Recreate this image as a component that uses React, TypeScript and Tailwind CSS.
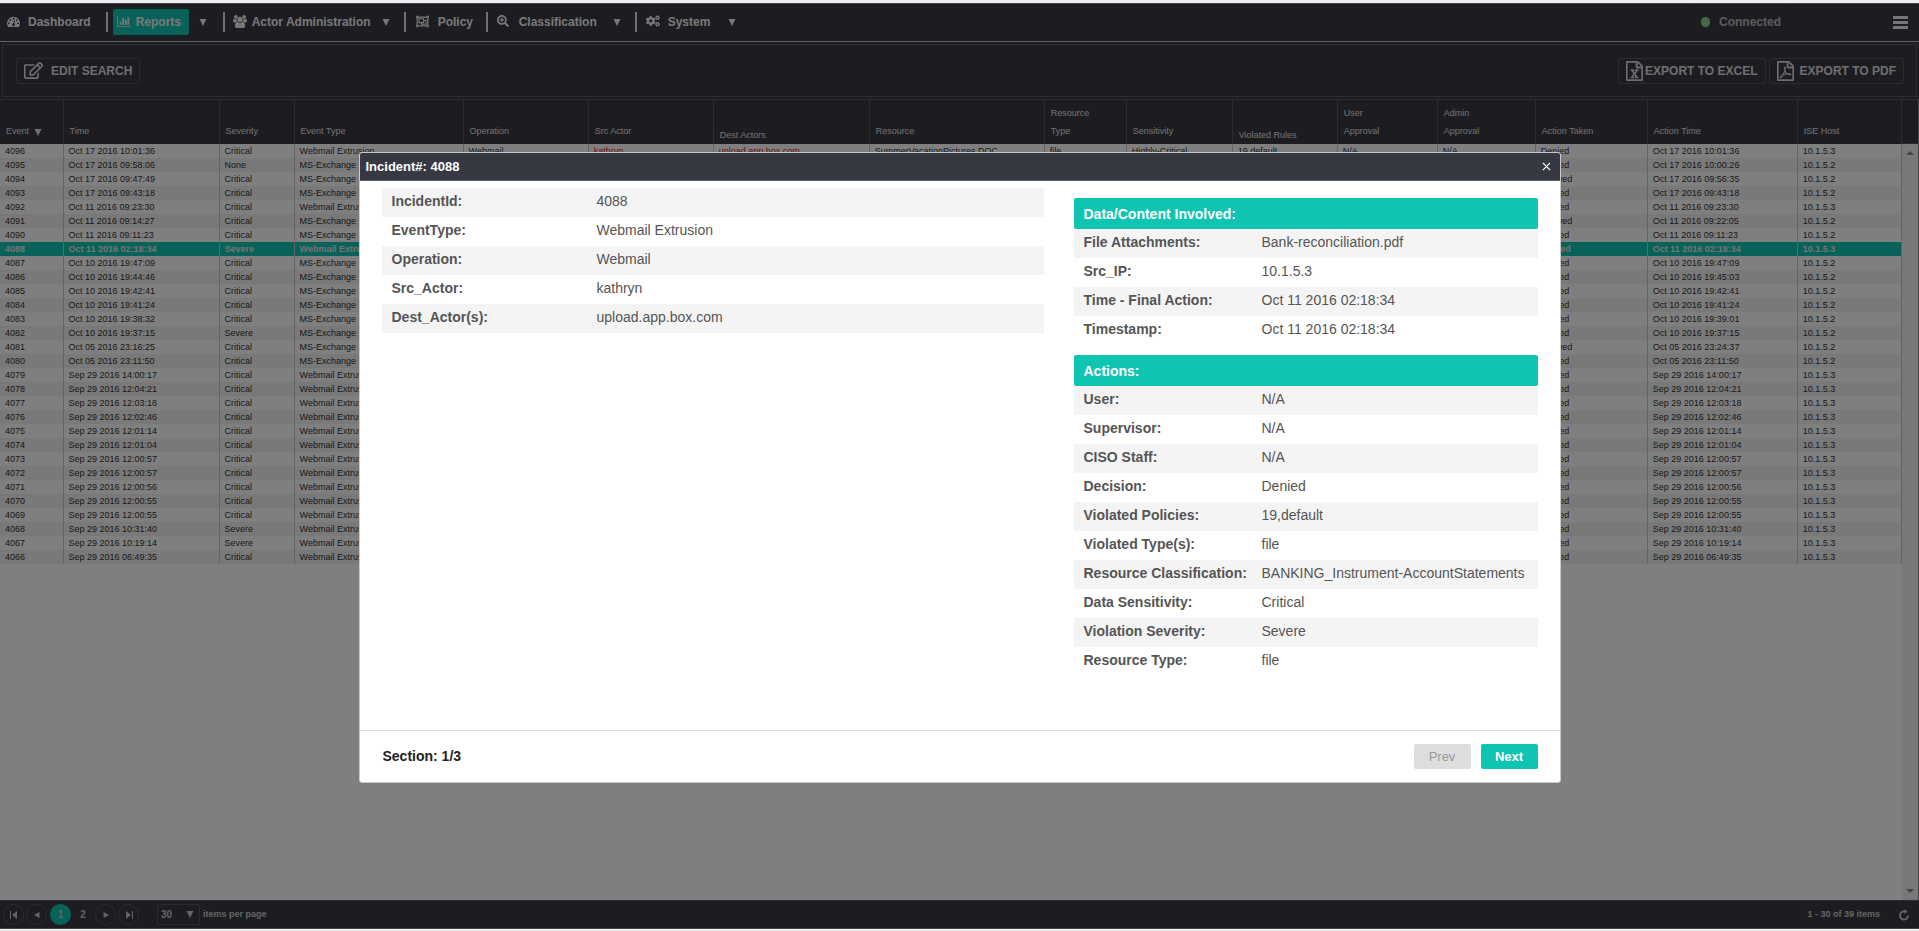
import { clsx } from 'clsx';
import React from 'react';
import { FaCogs, FaRegEdit, FaRegObjectGroup, FaSearchPlus } from 'react-icons/fa';

const paths = {
	dashboard:
		'M384 1152q0-53-37.5-90.5t-90.5-37.5-90.5 37.5-37.5 90.5 37.5 90.5 90.5 37.5 90.5-37.5 37.5-90.5zM576 704q0-53-37.5-90.5t-90.5-37.5-90.5 37.5-37.5 90.5 37.5 90.5 90.5 37.5 90.5-37.5 37.5-90.5zM1004 1185l101-382q6-26-7.5-48.5t-38.5-29.5-48 6.5-30 39.5l-101 382q-60 5-107 43.5t-63 98.5q-20 77 20 146t117 89 146-20 89-117q16-60-6-117t-72-91zM1664 1152q0-53-37.5-90.5t-90.5-37.5-90.5 37.5-37.5 90.5 37.5 90.5 90.5 37.5 90.5-37.5 37.5-90.5zM1024 512q0-53-37.5-90.5t-90.5-37.5-90.5 37.5-37.5 90.5 37.5 90.5 90.5 37.5 90.5-37.5 37.5-90.5zM1472 704q0-53-37.5-90.5t-90.5-37.5-90.5 37.5-37.5 90.5 37.5 90.5 90.5 37.5 90.5-37.5 37.5-90.5zM1792 1152q0 261-141 483-19 29-54 29h-1402q-35 0-54-29-141-221-141-483 0-182 71-348t191-286 286-191 348-71 348 71 286 191 191 286 71 348z',
	chart: 'M640 896v512h-256v-512h256zM1024 384v1024h-256v-1024h256zM2048 1536v128h-2048v-1536h128v1408h1920zM1408 640v768h-256v-768h256zM1792 256v1152h-256v-1152h256z',
	users: 'M593 896q-162 5-265 128h-134q-82 0-138-40.5t-56-118.5q0-353 124-353 6 0 43.5 21t97.5 42.5 119 21.5q67 0 133-23-5 37-5 66 0 139 81 256zM1664 1533q0 120-73 189.5t-194 69.5h-874q-121 0-194-69.5t-73-189.5q0-53 3.5-103.5t14-109 26.5-108.5 43-97.5 62-81 85.5-53.5 111.5-20q10 0 43 21.5t73 48 107 48 135 21.5 135-21.5 107-48 73-48 43-21.5q61 0 111.5 20t85.5 53.5 62 81 43 97.5 26.5 108.5 14 109 3.5 103.5zM640 256q0 106-75 181t-181 75-181-75-75-181 75-181 181-75 181 75 75 181zM1344 640q0 159-112.5 271.5t-271.5 112.5-271.5-112.5-112.5-271.5 112.5-271.5 271.5-112.5 271.5 112.5 112.5 271.5zM1920 865q0 78-56 118.5t-138 40.5h-134q-103-123-265-128 81-117 81-256 0-29-5-66 66 23 133 23 59 0 119-21.5t97.5-42.5 43.5-21q124 0 124 353zM1792 256q0 106-75 181t-181 75-181-75-75-181 75-181 181-75 181 75 75 181z',
	file: 'M1468 380q28 28 48 76t20 88v1152q0 40-28 68t-68 28h-1344q-40 0-68-28t-28-68v-1600q0-40 28-68t68-28h896q40 0 88 20t76 48zM1024 136v376h376q-10-29-22-41l-313-313q-12-12-41-22zM1408 1664v-1024h-416q-40 0-68-28t-28-68v-416h-768v1536h1280z',
	excel: 'M429 1430v106h281v-106h-75l103-161q5-7 10-16.5t7.5-13.5 3.5-4h2q1 4 5 10 2 4 4.5 7.5t6 8 6.5 8.5l107 161h-76v106h291v-106h-68l-192-273 195-282h67v-107h-279v107h74l-103 159q-4 7-10 16.5t-9 13.5l-2 3h-2q-1-4-5-10-6-11-17-23l-106-159h76v-107h-290v107h68l189 272-194 283h-68z',
	pdf: 'M894 1071q33 26 84 56 59-7 117-7 147 0 177 49 16 22 2 52 0 1-1 2l-2 2v1q-6 38-71 38-48 0-115-20t-130-53q-221 24-392 83-153 262-242 262-15 0-28-7l-24-12q-1-1-6-5-10-10-6-36 9-40 56-91.5t132-96.5q14-9 23 6 2 2 2 4 52-85 107-197 68-136 104-262-24-82-30.5-159.5t6.5-127.5q11-40 42-40h22q23 0 35 15 18 21 9 68-2 6-4 8 1 3 1 8v30q-2 123-14 192 55 164 146 238zM318 1482q52-24 137-158-51 40-87.5 84t-49.5 74zM716 562q-15 42-2 132 1-7 7-44 0-3 7-43 1-4 4-8-1-1-1-2-1-2-1-3-1-22-13-36 0 1-1 2v2zM592 1223q135-54 284-81-2-1-13-9.5t-16-13.5q-76-67-127-176-27 86-83 197-30 56-45 83zM1238 1207q-24-24-140-24 76 28 124 28 14 0 18-1 0-1-2-3z',
};

function Glyph({ d, width, className }: { d: string; width: number; className?: string }) {
	return (
		<svg viewBox={`0 0 ${width} 1792`} fill="currentColor" stroke="currentColor" className={className} aria-hidden="true">
			<path d={d} />
		</svg>
	);
}

function Caret({ className }: { className?: string }) {
	return (
		<svg viewBox="0 0 8 7" fill="currentColor" className={clsx('h-[7px] w-2 shrink-0', className)} aria-hidden="true">
			<path d="M0.5 0h7L4 7z" />
		</svg>
	);
}

interface Column {
	title: string;
	width: number;
	low?: boolean;
	sorted?: boolean;
}

const columns: Column[] = [
	{ title: 'Event', width: 63, sorted: true },
	{ title: 'Time', width: 156 },
	{ title: 'Severity', width: 75 },
	{ title: 'Event Type', width: 169 },
	{ title: 'Operation', width: 125 },
	{ title: 'Src Actor', width: 125 },
	{ title: 'Dest Actors', width: 156, low: true },
	{ title: 'Resource', width: 175 },
	{ title: 'Resource Type', width: 82 },
	{ title: 'Sensitivity', width: 106 },
	{ title: 'Violated Rules', width: 105, low: true },
	{ title: 'User Approval', width: 100 },
	{ title: 'Admin Approval', width: 98 },
	{ title: 'Action Taken', width: 112 },
	{ title: 'Action Time', width: 150 },
	{ title: 'ISE Host', width: 104 },
];

const WEB = 'Webmail Extrusion';
const MS = 'MS-Exchange';

// event, time, severity, event type, action taken, action time, host
const events = [
	['4096', 'Oct 17 2016 10:01:36', 'Critical', WEB, 'Denied', 'Oct 17 2016 10:01:36', '10.1.5.3'],
	['4095', 'Oct 17 2016 09:58:06', 'None', MS, 'Denied', 'Oct 17 2016 10:00:26', '10.1.5.2'],
	['4094', 'Oct 17 2016 09:47:49', 'Critical', MS, 'Allowed', 'Oct 17 2016 09:56:35', '10.1.5.2'],
	['4093', 'Oct 17 2016 09:43:18', 'Critical', MS, 'Denied', 'Oct 17 2016 09:43:18', '10.1.5.2'],
	['4092', 'Oct 11 2016 09:23:30', 'Critical', WEB, 'Denied', 'Oct 11 2016 09:23:30', '10.1.5.3'],
	['4091', 'Oct 11 2016 09:14:27', 'Critical', MS, 'Allowed', 'Oct 11 2016 09:22:05', '10.1.5.2'],
	['4090', 'Oct 11 2016 09:11:23', 'Critical', MS, 'Denied', 'Oct 11 2016 09:11:23', '10.1.5.2'],
	['4088', 'Oct 11 2016 02:18:34', 'Severe', WEB, 'Denied', 'Oct 11 2016 02:18:34', '10.1.5.3'],
	['4087', 'Oct 10 2016 19:47:09', 'Critical', MS, 'Denied', 'Oct 10 2016 19:47:09', '10.1.5.2'],
	['4086', 'Oct 10 2016 19:44:46', 'Critical', MS, 'Denied', 'Oct 10 2016 19:45:03', '10.1.5.2'],
	['4085', 'Oct 10 2016 19:42:41', 'Critical', MS, 'Denied', 'Oct 10 2016 19:42:41', '10.1.5.2'],
	['4084', 'Oct 10 2016 19:41:24', 'Critical', MS, 'Denied', 'Oct 10 2016 19:41:24', '10.1.5.2'],
	['4083', 'Oct 10 2016 19:38:32', 'Critical', MS, 'Denied', 'Oct 10 2016 19:39:01', '10.1.5.2'],
	['4082', 'Oct 10 2016 19:37:15', 'Severe', MS, 'Denied', 'Oct 10 2016 19:37:15', '10.1.5.2'],
	['4081', 'Oct 05 2016 23:16:25', 'Critical', MS, 'Allowed', 'Oct 05 2016 23:24:37', '10.1.5.2'],
	['4080', 'Oct 05 2016 23:11:50', 'Critical', MS, 'Denied', 'Oct 05 2016 23:11:50', '10.1.5.2'],
	['4079', 'Sep 29 2016 14:00:17', 'Critical', WEB, 'Denied', 'Sep 29 2016 14:00:17', '10.1.5.3'],
	['4078', 'Sep 29 2016 12:04:21', 'Critical', WEB, 'Denied', 'Sep 29 2016 12:04:21', '10.1.5.3'],
	['4077', 'Sep 29 2016 12:03:18', 'Critical', WEB, 'Denied', 'Sep 29 2016 12:03:18', '10.1.5.3'],
	['4076', 'Sep 29 2016 12:02:46', 'Critical', WEB, 'Denied', 'Sep 29 2016 12:02:46', '10.1.5.3'],
	['4075', 'Sep 29 2016 12:01:14', 'Critical', WEB, 'Denied', 'Sep 29 2016 12:01:14', '10.1.5.3'],
	['4074', 'Sep 29 2016 12:01:04', 'Critical', WEB, 'Denied', 'Sep 29 2016 12:01:04', '10.1.5.3'],
	['4073', 'Sep 29 2016 12:00:57', 'Critical', WEB, 'Denied', 'Sep 29 2016 12:00:57', '10.1.5.3'],
	['4072', 'Sep 29 2016 12:00:57', 'Critical', WEB, 'Denied', 'Sep 29 2016 12:00:57', '10.1.5.3'],
	['4071', 'Sep 29 2016 12:00:56', 'Critical', WEB, 'Denied', 'Sep 29 2016 12:00:56', '10.1.5.3'],
	['4070', 'Sep 29 2016 12:00:55', 'Critical', WEB, 'Denied', 'Sep 29 2016 12:00:55', '10.1.5.3'],
	['4069', 'Sep 29 2016 12:00:55', 'Critical', WEB, 'Denied', 'Sep 29 2016 12:00:55', '10.1.5.3'],
	['4068', 'Sep 29 2016 10:31:40', 'Severe', WEB, 'Denied', 'Sep 29 2016 10:31:40', '10.1.5.3'],
	['4067', 'Sep 29 2016 10:19:14', 'Severe', WEB, 'Denied', 'Sep 29 2016 10:19:14', '10.1.5.3'],
	['4066', 'Sep 29 2016 06:49:35', 'Critical', WEB, 'Denied', 'Sep 29 2016 06:49:35', '10.1.5.3'],
];

const firstDetails = [
	'Webmail',
	'kathryn',
	'upload.app.box.com',
	'SummerVacationPictures.DOC',
	'file',
	'Highly-Critical',
	'19,default',
	'N/A',
	'N/A',
];

const incident = [
	['IncidentId:', '4088'],
	['EventType:', 'Webmail Extrusion'],
	['Operation:', 'Webmail'],
	['Src_Actor:', 'kathryn'],
	['Dest_Actor(s):', 'upload.app.box.com'],
];

const content = [
	['File Attachments:', 'Bank-reconciliation.pdf'],
	['Src_IP:', '10.1.5.3'],
	['Time - Final Action:', 'Oct 11 2016 02:18:34'],
	['Timestamp:', 'Oct 11 2016 02:18:34'],
];

const actions = [
	['User:', 'N/A'],
	['Supervisor:', 'N/A'],
	['CISO Staff:', 'N/A'],
	['Decision:', 'Denied'],
	['Violated Policies:', '19,default'],
	['Violated Type(s):', 'file'],
	['Resource Classification:', 'BANKING_Instrument-AccountStatements'],
	['Data Sensitivity:', 'Critical'],
	['Violation Severity:', 'Severe'],
	['Resource Type:', 'file'],
];

function Divider() {
	return <span className="h-5 w-[2px] shrink-0 bg-[#dedede]" />;
}

function NavBar() {
	return (
		<nav className="flex h-[39px] shrink-0 items-center border-t border-b border-t-[#8a8a90] border-b-[#c4c4c8] pb-[1px] pl-[7px] text-[12px] font-bold text-[#f0f0f0] [&_a>svg]:mb-[2px]">
			<a href="#dashboard" className="flex items-center gap-2 pr-[15px]">
				<Glyph d={paths.dashboard} width={1792} className="h-[13px] w-[13px]" />
				Dashboard
			</a>
			<Divider />
			<a href="#reports" className="ml-[5px] flex h-[26px] w-[76px] items-center gap-[5px] rounded-[2px] bg-[#10c4b2] pl-1">
				<Glyph d={paths.chart} width={2048} className="h-[13px] w-[14px]" />
				Reports
			</a>
			<Caret className="mr-4 ml-[10px]" />
			<Divider />
			<a href="#actors" className="flex w-[157px] items-center gap-[5px] pl-2">
				<Glyph d={paths.users} width={1920} className="h-[13px] w-[14px]" />
				Actor Administration
			</a>
			<Caret className="mr-[14px]" />
			<Divider />
			<a href="#policy" className="flex w-20 items-center gap-2 pl-[9px]">
				<FaRegObjectGroup className="h-[13px] w-[15px]" />
				Policy
			</a>
			<Divider />
			<a href="#classification" className="flex w-[125px] items-center gap-[10px] pl-[9px]">
				<FaSearchPlus className="h-3 w-3" />
				Classification
			</a>
			<Caret className="mr-[14px]" />
			<Divider />
			<a href="#system" className="flex w-[91px] items-center gap-2 pl-[9px]">
				<FaCogs className="h-[14px] w-[14px]" />
				System
			</a>
			<Caret />
			<div className="mr-[102px] ml-auto flex h-full w-[103px] items-center gap-[9px] border-x border-[#38393f] pl-3 text-[#b8b8b8]">
				<span className="h-[10px] w-[9px] rounded-full bg-[#8ad28a]" />
				Connected
			</div>
			<button type="button" aria-label="Menu" className="mr-[11px] flex w-[15px] flex-col gap-[2px]">
				<span className="h-[3px] bg-[#ececec]" />
				<span className="h-[3px] bg-[#ececec]" />
				<span className="h-[3px] bg-[#ececec]" />
			</button>
		</nav>
	);
}

function Toolbar() {
	const button = 'flex h-[26px] items-center rounded-[3px] border border-[#55576a] px-[7px]';
	return (
		<div className="mx-[2px] my-[2px] flex h-[53px] shrink-0 items-center gap-[3px] border border-[#595b66] pr-3 pl-[13px] text-[12px] font-bold text-[#dcdcdc]">
			<button type="button" className={clsx(button, 'mr-auto gap-2')}>
				<FaRegEdit className="h-[17px] w-[19px]" />
				EDIT SEARCH
			</button>
			<button type="button" className={clsx(button, 'gap-[2px]')}>
				<Glyph d={paths.file + paths.excel} width={1536} className="h-5 w-[17px] stroke-[40]" />
				EXPORT TO EXCEL
			</button>
			<button type="button" className={clsx(button, 'gap-[6px]')}>
				<Glyph d={paths.file + paths.pdf} width={1536} className="h-5 w-[17px] stroke-[40]" />
				EXPORT TO PDF
			</button>
		</div>
	);
}

function EventGrid() {
	return (
		<div className="flex min-h-0 flex-1 overflow-hidden bg-white">
			<div className="min-w-0 flex-1">
				<table className="w-full table-fixed border-collapse text-left text-[9px] text-[#333]">
					<colgroup>
						{columns.map((column) => (
							<col key={column.title} style={{ width: `${(column.width / 1901) * 100}%` }} />
						))}
					</colgroup>
					<thead>
						<tr className="h-11 border-t border-[#595b66] bg-[#3a3b42] text-[#e0e0e0]">
							{columns.map((column) => (
								<th
									key={column.title}
									className={clsx(
										'border-r border-[#595b66] pl-[6px] align-bottom leading-[18px] font-normal',
										column.low ? 'pb-0' : 'pb-1',
									)}
								>
									{column.sorted ? (
										<span className="flex items-center gap-[5px]">
											{column.title}
											<Caret className="mt-[3px]" />
										</span>
									) : (
										<span className={clsx('block', / Approval|Resource Type/.test(column.title) && 'w-10')}>
											{column.title}
										</span>
									)}
								</th>
							))}
						</tr>
					</thead>
					<tbody>
						{events.map((row, i) => {
							const middle = i === 0 ? firstDetails : Array<string>(9).fill('');
							const cells = [...row.slice(0, 4), ...middle, ...row.slice(4)];
							return (
								<tr
									key={row[0]}
									className={clsx(
										'h-[14px]',
										row[0] === '4088' ? 'bg-[#10c4b2] font-bold text-[#e8e8e8]' : i % 2 ? 'bg-[#f3f3f3]' : 'bg-white',
									)}
								>
									{cells.map((cell, n) => (
										<td
											key={n}
											className={clsx(
												'overflow-hidden border-r border-[#c8c8c8] pl-[5px] leading-[14px] whitespace-nowrap',
												(n === 5 || n === 6) && 'text-[#e02020]',
											)}
										>
											{cell}
										</td>
									))}
								</tr>
							);
						})}
					</tbody>
				</table>
			</div>
			<div className="flex w-[17px] shrink-0 flex-col border-r border-[#8a8a90] bg-[#f0f0f0] text-[#888]">
				<div className="h-[45px] border-t border-b border-[#595b66] bg-[#3a3b42]" />
				<svg viewBox="0 0 8 4" fill="currentColor" className="mt-[7px] h-1 w-2 self-center" aria-hidden="true">
					<path d="M4 0l4 4H0z" />
				</svg>
				<svg viewBox="0 0 8 4" fill="currentColor" className="mt-auto mb-[7px] h-1 w-2 self-center" aria-hidden="true">
					<path d="M0 0h8L4 4z" />
				</svg>
			</div>
		</div>
	);
}

function PagerButton({ label, d }: { label: string; d: string }) {
	return (
		<button
			type="button"
			aria-label={label}
			className="flex h-[21px] w-[21px] items-center justify-center rounded-full border border-[#55576a]"
		>
			<svg viewBox="0 0 8 8" className="h-2 w-2" fill="currentColor" aria-hidden="true">
				<path d={d} />
			</svg>
		</button>
	);
}

function Pager() {
	return (
		<footer className="flex h-[29px] shrink-0 items-center border-t border-b border-t-[#595b66] border-b-[#8a8a90] pl-[3px] text-[9px] font-bold text-[#c8c8c8]">
			<div className="flex items-center gap-[2px] text-[10px]">
				<PagerButton label="First page" d="M0 0h1v8H0zM7 0v8L2 4z" />
				<PagerButton label="Previous page" d="M6.5 1v6L1 4z" />
				<button type="button" className="ml-[1px] h-[21px] w-[21px] rounded-full bg-[#10c4b2]">
					1
				</button>
				<button type="button" className="h-[21px] w-5">
					2
				</button>
				<PagerButton label="Next page" d="M1.5 1v6L7 4z" />
				<PagerButton label="Last page" d="M7 0h1v8H7zM1 0v8l5-4z" />
			</div>
			<label className="ml-[18px] flex items-center gap-[3px]">
				<span className="grid items-center">
					<select
						defaultValue="30"
						aria-label="Items per page"
						className="col-start-1 row-start-1 h-[21px] w-[43px] appearance-none rounded-[2px] border border-[#55576a] bg-transparent pl-[3px] text-[10px] outline-none"
					>
						<option>30</option>
					</select>
					<Caret className="pointer-events-none col-start-1 row-start-1 mr-[6px] justify-self-end" />
				</span>
				items per page
			</label>
			<span className="mr-[18px] ml-auto">1 - 30 of 39 items</span>
			<button type="button" aria-label="Refresh" className="mr-[9px]">
				<svg viewBox="0 0 12 12" fill="none" stroke="currentColor" strokeWidth="2" className="h-3 w-3" aria-hidden="true">
					<path d="M7 2.5H5.5a4 4 0 1 0 4.5 4" />
					<path d="M6.5 0l3 2.5-3 2.7z" fill="currentColor" stroke="none" />
				</svg>
			</button>
		</footer>
	);
}

function Details({ rows, wide }: { rows: string[][]; wide?: boolean }) {
	return (
		<table className="w-full table-fixed text-left text-[14px] text-[#555]">
			<tbody>
				{rows.map(([label, value]) => (
					<tr key={label} className="h-[29px] odd:bg-[#f4f4f4]">
						<th
							className={clsx(
								'pb-[3px] pl-[10px] leading-5 font-bold whitespace-nowrap',
								wide ? 'w-[215px]' : 'w-[188px]',
							)}
						>
							{label}
						</th>
						<td className="pb-[3px] leading-5 whitespace-nowrap">{value}</td>
					</tr>
				))}
			</tbody>
		</table>
	);
}

function SectionTitle({ children }: { children: React.ReactNode }) {
	return (
		<h3 className="h-[31px] rounded-[2px] bg-[#10c4b2] pl-[10px] text-[14px] leading-8 font-bold text-white">
			{children}
		</h3>
	);
}

function IncidentDialog() {
	return (
		<div
			role="dialog"
			aria-labelledby="incident-title"
			className="w-[1202px] max-w-full overflow-hidden rounded-[3px] border border-[#c9c9c9] bg-white"
		>
			<div className="flex h-7 items-center justify-between border-b border-[#5d5f6b] bg-[#373942] pr-[9px] pl-[6px] text-white">
				<h2 id="incident-title" className="text-[13px] font-bold">
					Incident#: 4088
				</h2>
				<button type="button" aria-label="Close">
					<svg viewBox="0 0 10 10" stroke="currentColor" strokeWidth="1.4" className="h-[9px] w-[9px]" aria-hidden="true">
						<path d="M1 1l8 8M9 1L1 9" />
					</svg>
				</button>
			</div>
			<div className="flex gap-[30px] px-[22px] pb-[54px]">
				<div className="flex-1 pt-[7px]">
					<Details rows={incident} wide />
				</div>
				<div className="flex w-[464px] flex-col gap-[10px] pt-[17px]">
					<section>
						<SectionTitle>Data/Content Involved:</SectionTitle>
						<Details rows={content} />
					</section>
					<section>
						<SectionTitle>Actions:</SectionTitle>
						<Details rows={actions} />
					</section>
				</div>
			</div>
			<div className="flex h-[52px] items-center gap-[10px] border-t border-[#ddd] px-[22px] text-[13px]">
				<span className="mr-auto pl-[1px] text-[14px] font-bold text-[#222]">Section: 1/3</span>
				<button type="button" disabled className="h-[25px] w-[57px] rounded-[2px] bg-[#dedede] text-[#9a9a9a]">
					Prev
				</button>
				<button type="button" className="h-[25px] w-[57px] rounded-[2px] bg-[#10c4b2] font-bold text-white">
					Next
				</button>
			</div>
		</div>
	);
}

export default function App() {
	return (
		<div className="h-screen bg-[#efeff1] pt-[3px] pb-[2px] font-['Liberation_Sans',Arial,sans-serif]">
			<div className="relative flex h-full flex-col bg-[#3a3b42]">
				<NavBar />
				<Toolbar />
				<EventGrid />
				<Pager />
				<div className="absolute inset-0 flex items-start justify-center bg-black/50 pt-[149px]">
					<IncidentDialog />
				</div>
			</div>
		</div>
	);
}
